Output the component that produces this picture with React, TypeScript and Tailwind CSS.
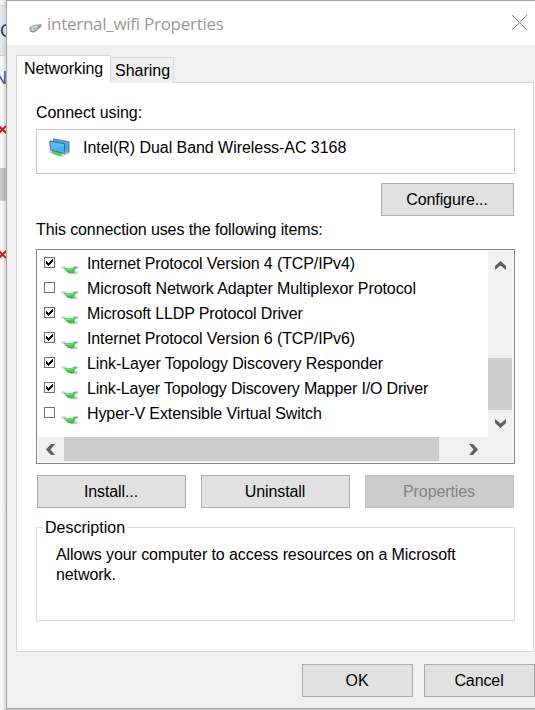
import React from "react";

function RedCross() {
  return (
    <svg width="7" height="9" viewBox="0 0 7 9" className="block shrink-0">
      <path d="M-1 1L6 8M6 1L-1 8" stroke="#c62128" strokeWidth="2" fill="none" />
    </svg>
  );
}

function BackgroundWindow() {
  return (
    <div className="flex h-[710px] w-[6px] shrink-0 flex-col overflow-hidden bg-gradient-to-r from-[#f8f8f8] via-[#f2f2f2] to-[#d4d4d4]">
      <div className="h-[6px] shrink-0 border-b border-[#d5d5d5]" />
      <div className="h-[50px] shrink-0 border-b border-[#d0d0d0] bg-gradient-to-r from-[#e9ecef] to-[#cfd3d7] pt-[15px] text-[18px] leading-[20px] text-[#1f3c6d]">
        <span className="block">C</span>
      </div>
      <div className="h-[69px] shrink-0 pt-[12px] text-[18px] leading-[20px] text-[#3a5a98]">
        <span className="-ml-[6px] block">N</span>
      </div>
      <RedCross />
      <div className="mt-[34px] h-[33px] shrink-0 bg-gradient-to-r from-[#cdcdcd] to-[#b4b4b4]" />
      <div className="h-[49px] shrink-0" />
      <RedCross />
    </div>
  );
}

function TitleIcon() {
  return (
    <svg width="14" height="9" viewBox="0 0 14 9" className="block">
      <path d="M0 3.500L4 1L12.500 0L12 3L8 6.500L4 8.500L1 7.500Z" fill="#a9b5bd" />
      <path d="M3 4L6 2L9 2L7 5L3 7Z" fill="#d3e2ea" />
      <path d="M9 1.500L12.500 0L12 3L9 5Z" fill="#6f9cc4" />
      <path d="M1 7L5 8L9 5.500" stroke="#8a938f" fill="none" />
      <path d="M4 5L8 3.500" stroke="#8fae5c" fill="none" />
    </svg>
  );
}

function AdapterIcon() {
  return (
    <svg width="22" height="20" viewBox="0 0 22 20" className="block">
      <path d="M4.500 .8L20 3.800V14.500L5 11Z" fill="#43aaf2" stroke="#66717a" strokeWidth=".9" />
      <path d="M0 13L6 13L14 15L16 17L14 19L8 18L0 15Z" fill="#d5d8d5" />
      <path d="M3 13L8 13.500L13 15.500L12 18L7 17L3 15Z" fill="#45cc51" />
      <path d="M.8 2.800L15.500 5.800V15.500L1.300 12Z" fill="#45b3fb" stroke="#52616d" strokeWidth=".9" />
      <path d="M2 4L15 6.500V8L2 11Z" fill="#75c7fd" opacity=".5" />
      <path d="M16 13L20 14L18 16L15 17Z" fill="#a4aaa7" />
    </svg>
  );
}

function ProtocolIcon() {
  return (
    <svg width="19" height="10" viewBox="0 0 19 10" className="block shrink-0">
      <path d="M0 1.500L3 1L6 2.500L5 4.500L1 4Z" fill="#d3d7d3" />
      <path d="M13 2L16 1L18 2L16 4Z" fill="#c0c6c0" />
      <path d="M12 6.500L16 6.500L17 8.500L14 9.500L11 8.500Z" fill="#c5cbc5" />
      <path d="M3 2.700L7 3.200L11 3L13.500 1.500L16 2.500L14 4.500L13.500 7.500L10 8.500L6 7L3.500 4.500Z" fill="#45c653" />
      <path d="M4 3.800L8 4.700L13 3.500" stroke="#82e086" strokeWidth="1.200" fill="none" />
      <path d="M6 6.800L10 8L13 7.500" stroke="#349a3e" strokeWidth=".8" fill="none" />
    </svg>
  );
}

function CheckBox({ checked }: { checked: boolean }) {
  return (
    <span className="block h-[11px] w-[11px] shrink-0 border border-[#707070] bg-white">
      {checked && (
        <svg width="9" height="9" viewBox="0 0 9 9" className="block" shapeRendering="crispEdges">
          <path d="M1 3H2V4H3V5H4V4H5V3H6V2H7V1H8V4H7V5H6V6H5V7H4V8H3V7H2V6H1Z" fill="#000" />
        </svg>
      )}
    </span>
  );
}

function Chevron({ className }: { className: string }) {
  return (
    <svg width="11" height="9" viewBox="0 0 11 9" className={"block " + className}>
      <path d="M0 5L5.500 0L11 5V9L5.500 4.500L0 9Z" fill="#606060" />
    </svg>
  );
}

function Button({ label, className }: { label: string; className: string }) {
  return (
    <button className={"flex h-[33px] shrink-0 items-center justify-center border tracking-[-0.1px] " + className}>
      <span className="-ml-px block leading-[20px]">{label}</span>
    </button>
  );
}

const items = [
  { label: "Internet Protocol Version 4 (TCP/IPv4)", checked: true, tracking: "tracking-[-0.11px]" },
  { label: "Microsoft Network Adapter Multiplexor Protocol", checked: false, tracking: "tracking-[-0.08px]" },
  { label: "Microsoft LLDP Protocol Driver", checked: true, tracking: "tracking-[-0.12px]" },
  { label: "Internet Protocol Version 6 (TCP/IPv6)", checked: true, tracking: "tracking-[-0.11px]" },
  { label: "Link-Layer Topology Discovery Responder", checked: true, tracking: "tracking-[-0.11px]" },
  { label: "Link-Layer Topology Discovery Mapper I/O Driver", checked: true, tracking: "tracking-[-0.17px]" },
  { label: "Hyper-V Extensible Virtual Switch", checked: false, tracking: "tracking-[-0.1px]" },
];

function ItemList() {
  return (
    <div className="mt-[9px] flex h-[215px] w-[479px] flex-col border border-[#828790] p-px">
      <div className="flex h-[186px]">
        <div className="w-[450px] bg-white">
          {items.map((item) => (
            <div key={item.label} className="flex h-[25px] items-start pl-[6px]">
              <div className="pt-[6px]"><CheckBox checked={item.checked} /></div>
              <div className="ml-[6px] pt-[14px]"><ProtocolIcon /></div>
              <span className={"ml-[7px] pt-[3px] leading-[20px] whitespace-nowrap " + item.tracking}>{item.label}</span>
            </div>
          ))}
        </div>
        <div className="flex w-[25px] flex-col items-start bg-[#f0f0f0]">
          <div className="flex h-[107px] pt-[10px] pl-[7px]"><Chevron className="" /></div>
          <div className="h-[52px] w-[24px] bg-[#cdcdcd]" />
          <div className="flex pt-[9px] pl-[7px]"><Chevron className="rotate-180" /></div>
        </div>
      </div>
      <div className="flex h-[25px] w-[475px] items-start bg-[#f0f0f0]">
        <div className="flex h-[24px] w-[26px] items-center pl-[7px]"><Chevron className="-rotate-90" /></div>
        <div className="h-[24px] w-[375px] bg-[#cdcdcd]" />
        <div className="ml-[29px] flex h-[24px] items-center"><Chevron className="rotate-90" /></div>
      </div>
    </div>
  );
}

function Tabs() {
  return (
    <div className="flex h-[28px] items-end">
      <div className="z-10 h-[28px] w-[95px] border border-b-0 border-[#d9d9d9] bg-white pt-[3px] pl-[7px] leading-[20px] tracking-[-0.1px]">Networking</div>
      <div className="-ml-px h-[26px] w-[64px] border border-b-0 border-[#d9d9d9] bg-[#f0f0f0] pt-[3px] pl-[4px] leading-[20px]">Sharing</div>
    </div>
  );
}

function PropertiesDialog() {
  return (
    <section className="flex h-[709px] w-[529px] flex-col border-t border-b border-l border-[#a5a5a5] bg-[#f0f0f0]">
      <header className="flex h-[44px] shrink-0 items-start bg-white pl-[22px]">
        <div className="mt-[23px]"><TitleIcon /></div>
        <h1 className="mt-[11px] ml-[4px] w-[465px] font-['Open_Sans',sans-serif] text-[17px] leading-[24px] tracking-[-0.27px] text-[#999999]">internal_wifi Properties</h1>
        <svg width="16" height="16" viewBox="0 0 16 16" className="mt-[14px]">
          <path d="M0 0L15 15M15 0L0 15" stroke="#858585" fill="none" />
        </svg>
      </header>
      <div className="pt-[10px] pl-[9px]">
        <Tabs />
        <main className="-mt-px flex h-[570px] w-[518px] flex-col border border-[#d9d9d9] bg-white pl-[19px]">
          <p className="mt-[20px] leading-[20px] tracking-[-0.05px]">Connect using:</p>
          <div className="mt-[6px] flex h-[45px] w-[479px] shrink-0 items-start border border-[#c8c8c8] pl-[12px]">
            <div className="mt-[8px]"><AdapterIcon /></div>
            <span className="mt-[8px] ml-[12px] leading-[20px] tracking-[-0.05px]">Intel(R) Dual Band Wireless-AC 3168</span>
          </div>
          <div className="mt-[9px] flex w-[478px] justify-end">
            <Button label="Configure..." className="w-[133px] border-[#adadad] bg-[#e1e1e1]" />
          </div>
          <p className="mt-[4px] leading-[20px] tracking-[-0.1px]">This connection uses the following items:</p>
          <ItemList />
          <div className="mt-[11px] ml-px flex gap-[15px]">
            <Button label="Install..." className="w-[149px] border-[#adadad] bg-[#e1e1e1]" />
            <Button label="Uninstall" className="w-[149px] border-[#adadad] bg-[#e1e1e1]" />
            <Button label="Properties" className="w-[149px] border-[#bfbfbf] bg-[#cccccc] text-[#838383]" />
          </div>
          <div className="mt-[19px] h-[94px] w-[479px] shrink-0 border border-[#dcdcdc] pl-[6px]">
            <h2 className="-mt-[10px] w-[84px] bg-white pl-[2px] leading-[20px]">Description</h2>
            <p className="mt-[7px] ml-[13px] w-[420px] leading-[20px] tracking-[-0.09px]">Allows your computer to access resources on a Microsoft network.</p>
          </div>
        </main>
      </div>
      <footer className="mt-[12px] flex gap-[11px] pl-[295px]">
        <Button label="OK" className="w-[111px] border-[#adadad] bg-[#e1e1e1]" />
        <Button label="Cancel" className="w-[111px] border-[#adadad] bg-[#e1e1e1]" />
      </footer>
    </section>
  );
}

export default function App() {
  return (
    <div className="flex h-[710px] w-[535px] overflow-hidden bg-[#cccccc] font-['Liberation_Sans',Arial,sans-serif] text-[16px] text-black">
      <BackgroundWindow />
      <PropertiesDialog />
    </div>
  );
}
